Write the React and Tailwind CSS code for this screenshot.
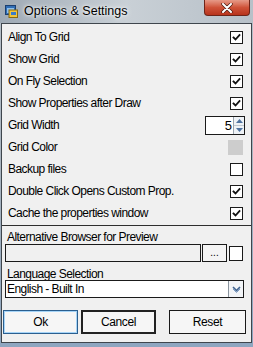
import React from "react";

const font = { fontFamily: '"Liberation Sans", Arial, sans-serif' };

function Check({ checked = true }) {
  return (
    <div className="w-[13px] h-[13px] border border-[#1a1a1a] bg-white flex items-center justify-center shrink-0">
      {checked && (
        <svg width="11" height="11" viewBox="0 0 11 11">
          <path d="M2.5 5.5 L4.5 7.5 L8.5 3" fill="none" stroke="#111" strokeWidth="1.8" strokeLinecap="square" />
        </svg>
      )}
    </div>
  );
}

function Row({ label, children }) {
  return (
    <div className="h-[22px] flex items-center justify-between">
      <span className="text-[12px] tracking-[-0.55px] text-black leading-none">{label}</span>
      {children}
    </div>
  );
}

export default function App() {
  return (
    <div
      className="w-[253px] h-[347px] flex flex-col bg-gradient-to-b from-[#b7c0c9] via-[#a9b4bf] to-[#8ea6c0] overflow-hidden"
      style={font}
    >
      {/* Title bar */}
      <div className="h-[23px] relative flex items-center shrink-0 bg-gradient-to-r from-[#9ea9b4] via-[#c9d0d6] to-[#b7c0c8]">
        <svg className="ml-[5px]" width="13" height="13" viewBox="0 0 13 13">
          <rect x="0.5" y="0.5" width="10" height="9" fill="#2f6db5" stroke="#1b3f70" />
          <rect x="2" y="3" width="7" height="5" fill="#8fc0ec" />
          <rect x="4" y="5" width="8.5" height="7.5" fill="#f3c53a" stroke="#8a6a10" />
          <rect x="6" y="7" width="5" height="3" fill="#3b7bc8" />
        </svg>
        <span className="ml-[6px] text-[12.5px] text-black leading-none" style={{ textShadow: "0 0 6px #fff, 0 0 3px #fff" }}>
          Options &amp; Settings
        </span>
        <div className="absolute left-[204px] top-0 w-[46px] h-[16px] rounded-b-[4px] border border-t-0 border-[#6e2418] bg-gradient-to-b from-[#e69a88] via-[#cf5238] to-[#b7331c] flex items-center justify-center">
          <svg width="12" height="10" viewBox="0 0 12 10">
            <path d="M2 1 L10 9 M10 1 L2 9" stroke="#4a1a10" strokeWidth="3.4" strokeLinecap="round" />
            <path d="M2 1 L10 9 M10 1 L2 9" stroke="#ffffff" strokeWidth="2" strokeLinecap="round" />
          </svg>
        </div>
      </div>

      {/* Client area */}
      <div className="px-[1px] pb-[4px] flex-1 flex">
        <div className="flex-1 border border-[#3f464d] bg-[#f0f0f0] flex flex-col">
          <div className="pt-[2px] pl-[6px] pr-[8px] flex flex-col">
            <Row label="Align To Grid"><Check /></Row>
            <Row label="Show Grid"><Check /></Row>
            <Row label="On Fly Selection"><Check /></Row>
            <Row label="Show Properties after Draw"><Check /></Row>
            <Row label="Grid Width">
              <div className="w-[40px] h-[19px] -mr-[2px] border border-[#1a1a1a] bg-white flex">
                <div className="flex-1 flex items-center justify-end pr-[1px] text-[13px] leading-none">5</div>
                <div className="w-[11px] border-l border-[#9aa4ae] flex flex-col bg-[#eef2f6]">
                  <div className="flex-1 flex items-center justify-center border-b border-[#c0c8d0]">
                    <svg width="7" height="4" viewBox="0 0 7 4"><path d="M0 4 L3.5 0 L7 4 Z" fill="#4f73a0" /></svg>
                  </div>
                  <div className="flex-1 flex items-center justify-center">
                    <svg width="7" height="4" viewBox="0 0 7 4"><path d="M0 0 L3.5 4 L7 0 Z" fill="#4f73a0" /></svg>
                  </div>
                </div>
              </div>
            </Row>
            <Row label="Grid Color">
              <div className="w-[15px] h-[15px] bg-[#cdcdcd]" />
            </Row>
            <Row label="Backup files"><Check checked={false} /></Row>
            <Row label="Double Click Opens Custom Prop."><Check /></Row>
            <Row label="Cache the properties window"><Check /></Row>
          </div>

          <div className="mt-[1px] h-px bg-[#2e2e2e]" />

          <div className="h-[18px] pt-[4px] pl-[5px] flex items-center text-[12px] tracking-[-0.55px] leading-none">
            Alternative Browser for Preview
          </div>
          <div className="h-[18px] flex items-stretch pl-[3px] pr-[8px]">
            <div className="w-[196px] border border-[#1a1a1a] bg-[#f0f0f0]" />
            <div className="ml-[1px] w-[25px] border border-[#1a1a1a] bg-[#f4f4f4] flex items-end justify-center pb-[3px] text-[10px] leading-none">...</div>
            <div className="ml-auto self-center w-[14px] h-[15px] border border-[#1a1a1a] bg-white" />
          </div>

          <div className="h-[18px] pt-[6px] pl-[5px] flex items-center text-[12px] tracking-[-0.55px] leading-none">
            Language Selection
          </div>
          <div className="h-[18px] ml-[3px] mr-[7px] border border-[#1a1a1a] bg-white flex items-center">
            <span className="flex-1 pl-[1px] text-[12px] tracking-[-0.55px] leading-none">English - Built In</span>
            <div className="w-[15px] h-full border-l border-[#8a949e] bg-[#f2f4f7] flex items-center justify-center">
              <svg width="9" height="7" viewBox="0 0 9 7">
                <path d="M1 1 L4.5 4.5 L8 1" fill="none" stroke="#3f6390" strokeWidth="1.6" />
                <path d="M1 3 L4.5 6.5 L8 3" fill="none" stroke="#7d9cc4" strokeWidth="1" />
              </svg>
            </div>
          </div>

          <div className="mt-[12px] h-[24px] flex pl-[1px] pr-[5px] text-[12px] tracking-[-0.4px]">
            <div className="w-[75px] border border-[#2b5f8f] bg-[#f6f6f6] flex items-center justify-center" style={{ boxShadow: "inset 0 0 0 1px #a6d4f7" }}>Ok</div>
            <div className="ml-[3px] w-[75px] border-2 border-[#222] bg-[#f6f6f6] flex items-center justify-center">Cancel</div>
            <div className="ml-auto w-[77px] border border-[#1a1a1a] bg-[#f6f6f6] flex items-center justify-center">Reset</div>
          </div>
        </div>
      </div>
    </div>
  );
}
